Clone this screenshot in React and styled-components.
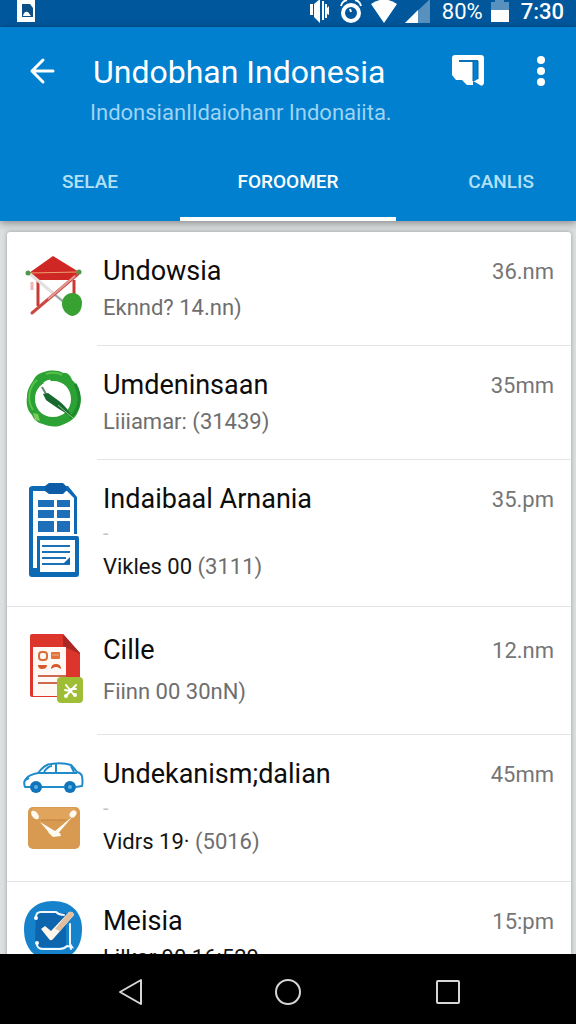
import React from "react";
import styled, { createGlobalStyle } from "styled-components";

const GlobalStyle = createGlobalStyle`
  * { box-sizing: border-box; }
  body {
    margin: 0;
    background: #dcdfe0;
    font-family: Roboto, "Liberation Sans", sans-serif;
  }
  button { font-family: inherit; }
  svg { display: block; flex: none; overflow: visible; }
`;

const Screen = styled.div`
  display: flex;
  flex-direction: column;
  height: 100vh;
  overflow: hidden;
`;

const StatusBar = styled.div`
  flex: none;
  display: flex;
  align-items: center;
  justify-content: space-between;
  height: 27px;
  padding: 0 12px 4px 17px;
  background: #00579c;
  color: #fff;
`;

const StatusGroup = styled.div`
  display: flex;
  align-items: center;
  gap: 8px;
`;

const StatusText = styled.span`
  margin-left: 4px;
  font-size: 22px;
  line-height: 22px;
  font-weight: ${(p) => (p.$strong ? 500 : 400)};
`;

const Header = styled.header`
  flex: none;
  position: relative;
  z-index: 1;
  background: #0080cf;
  color: #fff;
  box-shadow: 0 2px 8px rgba(0, 0, 0, 0.4);
`;

const AppBar = styled.div`
  display: flex;
  align-items: flex-start;
  height: 114px;
  padding: 24px 15px 0 22px;
`;

const IconButton = styled.button`
  display: flex;
  align-items: center;
  justify-content: center;
  flex: none;
  width: 40px;
  height: 40px;
  padding: 0;
  border: 0;
  background: none;
  color: inherit;
`;

const Heading = styled.div`
  flex: 1;
  min-width: 0;
  padding-left: 28px;
  white-space: nowrap;
`;

const Title = styled.h1`
  margin: 0 0 6px;
  padding-left: 3px;
  font-size: 32px;
  font-weight: 400;
  line-height: 42px;
`;

const Subtitle = styled.p`
  margin: 0;
  font-size: 22px;
  line-height: 28px;
  color: #9fd3f3;
`;

const Actions = styled.div`
  display: flex;
  gap: 33px;
`;

const Tabs = styled.nav`
  display: grid;
  grid-template-columns: 5fr 6fr 5fr;
  height: 80px;
`;

const Tab = styled.button`
  display: flex;
  align-items: center;
  justify-content: ${(p) => (p.$end ? "flex-end" : "center")};
  padding: ${(p) => (p.$end ? "4px 42px 0 0" : "4px 0 0")};
  border: 0;
  border-bottom: 4px solid ${(p) => (p.$active ? "#fff" : "transparent")};
  background: none;
  color: ${(p) => (p.$active ? "#fff" : "#b4e0f8")};
  font-size: 19px;
  font-weight: 500;
`;

const Content = styled.main`
  flex: 1;
  min-height: 0;
  overflow: hidden;
  padding: 11px 5px 0 7px;
`;

const Card = styled.ul`
  margin: 0;
  padding: 0;
  list-style: none;
  background: #fff;
  border-radius: 3px;
  box-shadow: 0 0 4px rgba(0, 0, 0, 0.3);
`;

const rowHeights = { regular: 114, medium: 128, tall: 147 };

const Row = styled.li`
  display: flex;
  gap: 13px;
  min-height: ${(p) => rowHeights[p.$size]}px;
  padding-left: 17px;
  border-bottom: ${(p) => (p.$fullLine ? "1px solid #e2e4e5" : "0")};
`;

const RowIcon = styled.div`
  flex: none;
  width: 60px;
  padding-top: 20px;
`;

const RowBody = styled.div`
  flex: 1;
  display: flex;
  justify-content: space-between;
  padding: ${(p) => (p.$size === "medium" ? 25 : 21)}px 17px 0 6px;
  border-bottom: ${(p) => (p.$fullLine ? "0" : "1px solid #e2e4e5")};
  white-space: nowrap;
`;

const RowText = styled.div`
  display: flex;
  flex-direction: column;
  gap: ${(p) => (p.$size === "medium" ? 6 : p.$size === "tall" ? 0 : 1)}px;
`;

const Name = styled.h2`
  margin: 0;
  font-size: 27px;
  font-weight: 400;
  line-height: 36px;
  color: #0c0c0c;
`;

const Dash = styled.span`
  font-size: 20px;
  line-height: 32px;
  color: #c4c4c4;
`;

const Detail = styled.p`
  margin: 0;
  font-size: 22px;
  line-height: 36px;
  color: #6e6e6e;
`;

const Lead = styled.span`
  color: #141414;
`;

const Time = styled.span`
  font-size: 22px;
  line-height: 38px;
  color: #757575;
`;

const NavBar = styled.footer`
  flex: none;
  display: flex;
  align-items: center;
  justify-content: center;
  gap: 120px;
  height: 70px;
  padding-top: 6px;
  background: #000;
  color: #d6d6d6;
`;

function Gazebo() {
  return (
    <svg width="60" height="68" viewBox="0 0 60 68">
      <path d="M14 28V54M50 28v16" stroke="#c93a36" strokeWidth="3" />
      <path d="M8 30v8" stroke="#eab5b2" strokeWidth="3" />
      <path d="M5 21 29 4 55 20 46 28H12Z" fill="#cf2824" />
      <path d="M6 21 54 20" stroke="#eba06c" strokeWidth="1" />
      <path d="M6 22 41 51" stroke="#e5e0e0" strokeWidth="3" />
      <path d="M30 42 42 52" stroke="#9aa7a2" strokeWidth="2" />
      <path d="M54 22 8 61" stroke="#cc4842" strokeWidth="3" strokeLinecap="round" />
      <path d="M51 24 24 47" stroke="#e39a94" strokeWidth="2" />
      <circle cx="4" cy="21" r="2.5" fill="#4b9a45" />
      <circle cx="55" cy="20" r="2.5" fill="#4b9a45" />
      <path d="M48 41c6 0 10 4 10 10 0 8-5 13-10 13-5-1-10-6-10-12 0-7 5-11 10-11Z" fill="#38a132" />
    </svg>
  );
}

function GreenRing() {
  return (
    <svg width="60" height="66" viewBox="0 0 60 66">
      <path
        fillRule="evenodd"
        fill="#2ba233"
        d="M20 6c7-2 14-2 19 1 4-1 8 3 9 7 5 4 7 9 8 14 2 8 0 14-3 20-3 6-10 9-15 11-7 3-14 1-19-1-5-1-9-4-11-9-5-5-6-12-5-18 0-7 3-12 6-16 2-5 6-8 11-9ZM29 15C18 15 11 23 11 33s7 18 18 18 18-8 18-18-7-18-18-18Z"
      />
      <path d="M13 14C4 22 3 35 9 44M22 8c6-2 11-2 16 1" fill="none" stroke="#57c14b" strokeWidth="2" />
      <path d="M51 18c7 12 5 25-5 34" fill="none" stroke="#1c8a2c" strokeWidth="3" />
      <path d="M19 17q5-4 8-3l-3 5Z" fill="#fff" />
      <path d="M18 21l4 7" stroke="#6c8577" strokeWidth="2" />
      <path d="m19 28 5-1 11 8q8 6 13 16L35 43q-9-6-13-9Z" fill="#17692f" />
      <path d="M34 39 49 52" stroke="#8fd081" strokeWidth="1" />
      <path d="m9 47 5 1 2 7-5-1Z" fill="#7bcb5d" />
    </svg>
  );
}

function Clipboard() {
  return (
    <svg width="60" height="100" viewBox="0 0 60 100">
      <path d="M9 6h35l9 11v37h-3V18l-7-7H9v84h-4V9q0-3 4-3Z" fill="#0d69b3" />
      <path d="M7 9v84" stroke="#0d69b3" strokeWidth="4" />
      <path d="M25 3h14l3 3v5l-3 3H25l-4-3V6Z" fill="#0d5ca8" />
      <g fill="#1c6fb8">
        <path d="M14 20h16v7H14zM33 20h13v7H33zM14 30h16v8H14zM33 30h13v8H33zM14 41h16v11H14zM33 41h13v11H33z" />
      </g>
      <path fillRule="evenodd" d="M13 56h40q2 0 2 2v36q0 3-3 3H8q-3 0-3-3v-6h8ZM16 60v32h35V60Z" fill="#0d69b3" />
      <path d="M18 66h28M18 72h28M18 78h24M18 84h28" stroke="#1d71b7" strokeWidth="2" />
      <path d="m39 84 7-7v7Z" fill="#0d69b3" />
    </svg>
  );
}

function RedDocument() {
  return (
    <svg width="60" height="78" viewBox="0 0 60 78">
      <path d="M8 7h31l17 19v44H8q-2 0-2-2V9q0-2 2-2Z" fill="#dc352b" />
      <path d="M39 7v12l17 8v-1Z" fill="#a92724" />
      <path d="M9 20h33v49H9z" fill="#fff8f4" />
      <rect x="15" y="25" width="8" height="8" rx="3" fill="none" stroke="#d96d3b" strokeWidth="2" />
      <rect x="27" y="25" width="9" height="7" rx="1" fill="#df733b" />
      <path d="M28 28h7" stroke="#f0b28e" />
      <path d="M14 38h9q0 4-5 4-4 0-4-4ZM27 42q0-5 5-5t5 5l-4-2h-2Z" fill="#d9592d" />
      <path d="M14 49h28M14 56h20" stroke="#cf6850" strokeWidth="2" />
      <rect x="33" y="50" width="26" height="26" rx="4" fill="#9fbe35" />
      <path d="m42 58 8 10M52 58 42 69M41 63l5 1M47 62h5" stroke="#fff" strokeWidth="2" strokeLinecap="round" />
      <circle cx="42" cy="69" r="2" fill="#fff" />
      <circle cx="51" cy="68" r="2" fill="#fff" />
    </svg>
  );
}

function CarAndEnvelope() {
  return (
    <svg width="60" height="96" viewBox="0 0 60 96">
      <g fill="none" stroke="#1f8bcb" strokeWidth="2" strokeLinejoin="round">
        <path d="M7 32H1q-2-5 1-8 2-4 12-6Q21 9 27 9q12-2 20 1 3 3 6 7 4 1 5 4 1 6 0 10l-6 1M18 32h22" />
        <path d="M14 18h39M32 9v9M20 17q4-6 8-6M47 11l3 6M1 25l4-2" />
      </g>
      <circle cx="12" cy="32" r="6" fill="#0f74b9" />
      <circle cx="46" cy="32" r="6" fill="#0f74b9" />
      <circle cx="12" cy="32" r="2" fill="#5cb1e0" />
      <circle cx="46" cy="32" r="2" fill="#5cb1e0" />
      <rect x="4" y="52" width="52" height="42" rx="5" fill="#d89a50" />
      <path d="M9 53h42l3 4-12 8H17L6 57Z" fill="#e0a45c" />
      <path d="M17 65h25" stroke="#be8142" />
      <path d="m16 67 12 14h4l17-20-18 15Z" fill="#fffaf2" />
      <path d="m24 77 5 5 8-1-1-3Z" fill="#fffaf2" />
      <ellipse cx="11" cy="60" rx="3" ry="5" transform="rotate(-38 11 60)" fill="#fffaf2" />
      <ellipse cx="49" cy="59" rx="3" ry="4" transform="rotate(40 49 59)" fill="#fffaf2" />
    </svg>
  );
}

function CheckBadge() {
  return (
    <svg width="60" height="60" viewBox="0 0 60 60">
      <path d="M29-1C47-1 58 10 58 27c0 20-11 31-29 31S0 47 0 27C0 10 11-1 29-1Z" fill="#1682cc" />
      <path d="M12 11h30v34H17q-6 0-6-6Z" fill="#0d66ad" />
      <path
        d="M12 15q0-5 5-5h15q3 3 8 3M46 22v20l2 3-5-1q-3 3-7 3H19q-5 0-6-4M46 42l1 5"
        fill="none"
        stroke="#eef8ff"
        strokeWidth="2"
        strokeLinecap="round"
      />
      <circle cx="12" cy="16" r="2" fill="#fff" />
      <circle cx="13" cy="41" r="2" fill="#fff" />
      <path d="m17 27 4-3 6 5L45 10q4-1 5 3L30 36q-3 4-5 1Z" fill="#fff6ec" />
      <path d="M31 27 45 10q4-1 5 3L36 29Z" fill="#e2bfa0" />
    </svg>
  );
}

const items = [
  { name: "Undowsia", detail: "Eknnd? 14.nn)", time: "36.nm", size: "regular", Icon: Gazebo },
  { name: "Umdeninsaan", detail: "Liiiamar: (31439)", time: "35mm", size: "regular", Icon: GreenRing },
  { name: "Indaibaal Arnania", lead: "Vikles 00", detail: "(3111)", time: "35.pm", size: "tall", fullLine: true, Icon: Clipboard },
  { name: "Cille", detail: "Fiinn 00 30nN)", time: "12.nm", size: "medium", Icon: RedDocument },
  { name: "Undekanism;dalian", lead: "Vidrs 19·", detail: "(5016)", time: "45mm", size: "tall", fullLine: true, Icon: CarAndEnvelope },
  { name: "Meisia", lead: "Lilkar 90 16:529", time: "15:pm", size: "regular", Icon: CheckBadge },
];

function ListRow({ name, lead, detail, time, size, fullLine, Icon }) {
  return (
    <Row $size={size} $fullLine={fullLine}>
      <RowIcon aria-hidden="true"><Icon /></RowIcon>
      <RowBody $size={size} $fullLine={fullLine}>
        <RowText $size={size}>
          <Name>{name}</Name>
          {size === "tall" && <Dash>-</Dash>}
          <Detail>
            {lead && <Lead>{lead} </Lead>}
            {detail}
          </Detail>
        </RowText>
        <Time>{time}</Time>
      </RowBody>
    </Row>
  );
}

function StatusIcons() {
  return (
    <>
      <svg width="22" height="23" viewBox="0 0 22 23" fill="currentColor">
        <path d="M1 4h3v11H1zM5 4l6-5v24l-6-6ZM13 1h2v19h-2zM16 4h2v4l2-2v9l-2-1v4h-2z" />
      </svg>
      <svg width="24" height="23" viewBox="0 0 24 23" fill="none" stroke="currentColor">
        <circle cx="12" cy="13" r="8" strokeWidth="4" />
        <path d="M2 6q1-5 6-6M16 0q5 1 6 6M11 9l1 3" strokeWidth="2" />
      </svg>
      <svg width="26" height="23" viewBox="0 0 26 23" fill="currentColor">
        <path d="M0 4q13-9 26 0L13 23Z" />
      </svg>
      <svg width="25" height="23" viewBox="0 0 25 23" fill="currentColor">
        <path d="M0 23 25-1v24Z" opacity=".35" />
        <path d="M0 23 13 10v13Z" />
      </svg>
    </>
  );
}

export default function App() {
  return (
    <Screen>
      <GlobalStyle />
      <StatusBar>
        <svg width="18" height="21" viewBox="0 0 18 21">
          <path d="M0-2h18v23H0z" fill="#fff" />
          <path d="M5 3h8l3 4v9H5Z" fill="#0b4f86" />
          <path d="M6 15q1-5 5-4l3 4Z" fill="#fff" />
        </svg>
        <StatusGroup>
          <StatusIcons />
          <StatusText>80%</StatusText>
          <svg width="18" height="21" viewBox="0 0 18 21" fill="currentColor">
            <path d="M4-1h9v2h5v9H0V1h4Z" opacity=".35" />
            <path d="M0 9h18v12H0z" />
          </svg>
          <StatusText $strong>7:30</StatusText>
        </StatusGroup>
      </StatusBar>

      <Header>
        <AppBar>
          <IconButton aria-label="Back">
            <svg width="26" height="26" viewBox="0 0 26 26" fill="none" stroke="currentColor" strokeWidth="3" strokeLinecap="round" strokeLinejoin="round">
              <path d="M14 2 3 13l11 11M3 13h21" />
            </svg>
          </IconButton>
          <Heading>
            <Title>Undobhan Indonesia</Title>
            <Subtitle>IndonsianIldaiohanr Indonaiita.</Subtitle>
          </Heading>
          <Actions>
            <IconButton aria-label="Cards">
              <svg width="32" height="32" viewBox="0 0 32 32">
                <path d="M3 0h26q3 0 3 3v25q-1 4-4 2l-5-3h-2v3h-6l-5-5H4l-4-5V3q0-3 3-3Z" fill="#fff" />
                <path d="M21 6h5v18l-5 3Z" fill="#0080cf" />
                <path d="M7 6h19" stroke="#0873b8" strokeWidth="2" />
                <path d="M21 6v20M26 6v18" stroke="#0865a6" />
              </svg>
            </IconButton>
            <IconButton aria-label="More options">
              <svg width="8" height="30" viewBox="0 0 8 30" fill="currentColor">
                <circle cx="4" cy="4" r="4" />
                <circle cx="4" cy="15" r="4" />
                <circle cx="4" cy="26" r="4" />
              </svg>
            </IconButton>
          </Actions>
        </AppBar>
        <Tabs>
          <Tab>SELAE</Tab>
          <Tab $active aria-current="page">FOROOMER</Tab>
          <Tab $end>CANLIS</Tab>
        </Tabs>
      </Header>

      <Content>
        <Card>
          {items.map((item) => (
            <ListRow key={item.name} {...item} />
          ))}
        </Card>
      </Content>

      <NavBar>
        <IconButton aria-label="Navigate back">
          <svg width="26" height="28" viewBox="0 0 26 28" fill="none" stroke="currentColor" strokeWidth="2" strokeLinejoin="round">
            <path d="M26 2v24L5 14Z" />
          </svg>
        </IconButton>
        <IconButton aria-label="Home">
          <svg width="28" height="28" viewBox="0 0 28 28" fill="none" stroke="currentColor" strokeWidth="2">
            <circle cx="14" cy="14" r="12" />
          </svg>
        </IconButton>
        <IconButton aria-label="Recent apps">
          <svg width="26" height="26" viewBox="0 0 26 26" fill="none" stroke="currentColor" strokeWidth="2">
            <rect x="2" y="2" width="22" height="22" rx="1" />
          </svg>
        </IconButton>
      </NavBar>
    </Screen>
  );
}
